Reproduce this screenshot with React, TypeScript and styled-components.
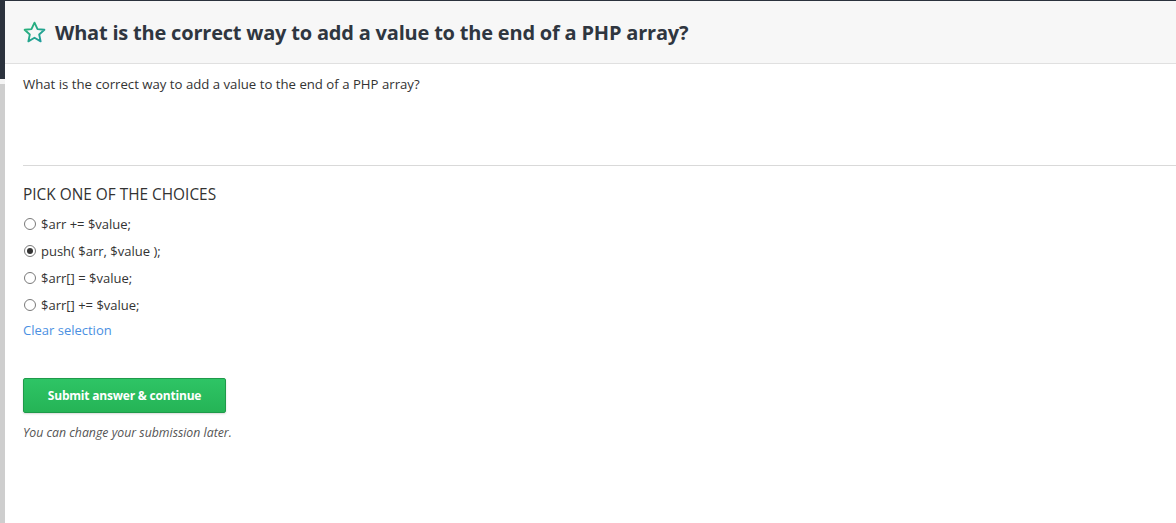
import React from "react";
import styled, { createGlobalStyle } from "styled-components";

const Global = createGlobalStyle`
  html, body { margin: 0; padding: 0; background: #fff; }
  body { font-family: "Open Sans", "Noto Sans", sans-serif; color: #333; }
  * { box-sizing: border-box; }
`;

const Page = styled.div`
  display: flex;
  width: 1176px;
  height: 523px;
  border-top: 1px solid #2b323d;
  overflow: hidden;
`;

const Rail = styled.div`
  width: 5px;
  flex: none;
  display: flex;
  flex-direction: column;
`;

const RailTop = styled.div`
  height: 78px;
  background: #2b323d;
`;

const RailGap = styled.div`
  height: 5px;
  background: #f4f4f4;
`;

const RailRest = styled.div`
  flex: 1;
  background: #cecece;
`;

const Main = styled.div`
  flex: 1;
  display: flex;
  flex-direction: column;
`;

const Header = styled.div`
  height: 63px;
  background: #f7f7f7;
  border-bottom: 1px solid #e0e0e0;
  display: flex;
  align-items: center;
  gap: 8px;
  padding-left: 17px;
`;

const Title = styled.h1`
  margin: 0;
  font-family: "Open Sans", sans-serif;
  font-size: 20px;
  font-weight: 700;
  color: #2f3640;
  letter-spacing: -0.2px;
`;

const Body = styled.div`
  padding: 11px 0 0 18px;
  display: flex;
  flex-direction: column;
`;

const Question = styled.p`
  margin: 0;
  font-size: 13.2px;
  color: #333;
  height: 90px;
`;

const Divider = styled.hr`
  margin: 0;
  border: none;
  border-top: 1px solid #d9d9d9;
`;

const PickTitle = styled.div`
  margin-top: 18px;
  font-size: 15.4px;
  color: #333;
  text-transform: uppercase;
`;

const Choices = styled.div`
  margin-top: 5px;
  display: flex;
  flex-direction: column;
`;

const Choice = styled.label`
  display: flex;
  align-items: center;
  gap: 5px;
  height: 27px;
  font-size: 13px;
  color: #333;
`;

const Radio = styled.span<{ $checked?: boolean }>`
  width: 12px;
  height: 12px;
  border-radius: 50%;
  border: 1px solid #7a7a7a;
  background: #fff;
  display: flex;
  align-items: center;
  justify-content: center;
  margin-left: 1px;
  &::after {
    content: "";
    display: ${(p) => (p.$checked ? "block" : "none")};
    width: 6px;
    height: 6px;
    border-radius: 50%;
    background: #333;
  }
`;

const ClearLink = styled.a`
  margin-top: 3px;
  font-size: 13px;
  color: #4a90e2;
  text-decoration: none;
  cursor: pointer;
`;

const SubmitButton = styled.button`
  margin-top: 39px;
  width: 203px;
  height: 35px;
  border: 1px solid #1f9a4a;
  border-radius: 2px;
  background: linear-gradient(#2ec465, #25b456);
  color: #fff;
  font-family: "Open Sans", sans-serif;
  font-size: 12px;
  font-weight: 700;
  letter-spacing: -0.2px;
  box-shadow: 0 1px 2px rgba(0, 0, 0, 0.15);
  align-self: flex-start;
`;

const Note = styled.div`
  margin-top: 11px;
  font-size: 12.3px;
  font-style: italic;
  color: #555;
`;

const StarIcon = () => (
  <svg width="25" height="25" viewBox="0 0 24 24" fill="none">
    <defs>
      <linearGradient id="sg" x1="0" y1="0" x2="1" y2="1">
        <stop offset="0" stopColor="#2bb673" />
        <stop offset="1" stopColor="#1f9aa0" />
      </linearGradient>
    </defs>
    <path
      d="M12 2.5l2.9 6.2 6.6.7-5 4.5 1.4 6.6L12 17.1l-5.9 3.4 1.4-6.6-5-4.5 6.6-.7z"
      stroke="url(#sg)"
      strokeWidth="1.8"
      strokeLinejoin="round"
    />
  </svg>
);

const choices = [
  { text: "$arr += $value;", checked: false },
  { text: "push( $arr, $value );", checked: true },
  { text: "$arr[] = $value;", checked: false },
  { text: "$arr[] += $value;", checked: false },
];

export default function App() {
  return (
    <>
      <Global />
      <Page>
        <Rail>
          <RailTop />
          <RailGap />
          <RailRest />
        </Rail>
        <Main>
          <Header>
            <StarIcon />
            <Title>What is the correct way to add a value to the end of a PHP array?</Title>
          </Header>
          <Body>
            <Question>What is the correct way to add a value to the end of a PHP array?</Question>
            <Divider />
            <PickTitle>Pick one of the choices</PickTitle>
            <Choices>
              {choices.map((c) => (
                <Choice key={c.text}>
                  <Radio $checked={c.checked} />
                  {c.text}
                </Choice>
              ))}
            </Choices>
            <ClearLink>Clear selection</ClearLink>
            <SubmitButton>Submit answer &amp; continue</SubmitButton>
            <Note>You can change your submission later.</Note>
          </Body>
        </Main>
      </Page>
    </>
  );
}
